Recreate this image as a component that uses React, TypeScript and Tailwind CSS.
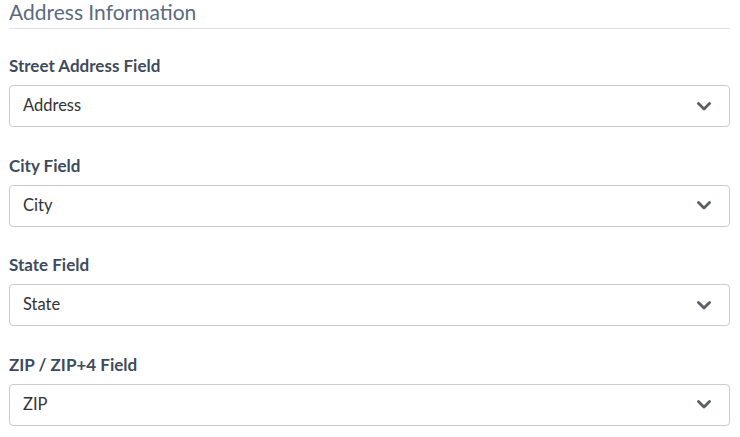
const fields = [
  { label: 'Street Address Field', placeholder: 'Address' },
  { label: 'City Field', placeholder: 'City' },
  { label: 'State Field', placeholder: 'State' },
  { label: 'ZIP / ZIP+4 Field', placeholder: 'ZIP' },
];

function Chevron() {
  return (
    <svg viewBox="0 0 14 9" className="w-[14px] h-[9px]" fill="none" stroke="#5a5e63" strokeWidth="2.8" strokeLinecap="round" strokeLinejoin="round">
      <polyline points="1.5 1.5 7 7 12.5 1.5" />
    </svg>
  );
}

export default function App() {
  return (
    <div className="bg-white w-[740px] h-[437px] overflow-hidden pl-[9px] pr-[10px] font-['Lato','Liberation_Sans',sans-serif]">
      <h2 className="text-[21px] leading-[24px] text-[#5b6b80] pb-[4px] border-b border-[#e3e3e3]">
        Address Information
      </h2>

      <div className="flex flex-col gap-[28.5px] pt-[27px]">
        {fields.map((f) => (
          <div key={f.label} className="flex flex-col">
            <label className="text-[17px] leading-[20px] font-bold text-[#3e4b5c] mb-[9px]">{f.label}</label>
            <div className="h-[42px] rounded-[4px] border border-[#cccccc] flex items-center justify-between pl-[13px] pr-[18px]">
              <span className="text-[16.5px] leading-[20px] text-[#333333] -mt-[2px]">{f.placeholder}</span>
              <Chevron />
            </div>
          </div>
        ))}
      </div>
    </div>
  );
}
